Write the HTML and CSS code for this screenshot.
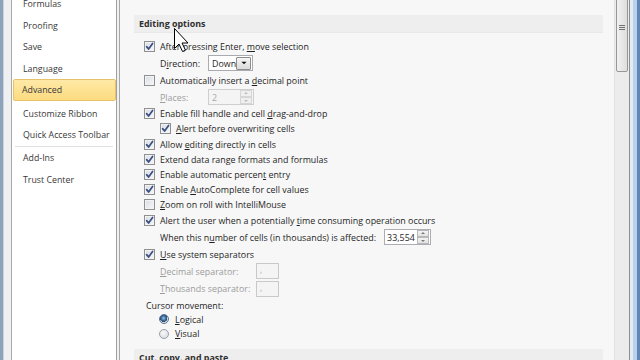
FILE: index.html
```html
<!DOCTYPE html>
<html>
<head>
<meta charset="utf-8">
<title>Excel Options - Advanced</title>
<link rel="stylesheet" href="styles.css">
</head>
<body>
<div class="window">
  <div class="frame-l"></div>
  <div class="gutter"></div>
  <nav class="sidebar">
    <ul class="nav">
      <li class="item">Formulas</li>
      <li class="item">Proofing</li>
      <li class="item">Save</li>
      <li class="item">Language</li>
      <li class="item active">Advanced</li>
      <li class="item after-active">Customize Ribbon</li>
      <li class="item">Quick Access Toolbar</li>
      <li class="sep"></li>
      <li class="item">Add-Ins</li>
      <li class="item">Trust Center</li>
    </ul>
  </nav>
  <div class="gap"></div>
  <main class="content">
    <section class="section">
      <h2 class="band">Editing options</h2>
      <div class="rows">
        <div class="row h17"><span class="cb on"><svg viewBox="0 0 9 9"><path d="M1.6 4.6 L3.6 7 L7.6 1.4"/></svg></span><span class="lbl">After pressing Enter, <u>m</u>ove selection</span></div>
        <div class="row h17 ind"><span class="fl w48">D<u>i</u>rection:</span><span class="dd"><span class="dd-t">Down</span><span class="dd-b"><svg viewBox="0 0 7 4"><path d="M0.5 0.5 H6.5 L3.5 3.5 Z"/></svg></span></span></div>
        <div class="row h17"><span class="cb"></span><span class="lbl">Automatically insert a <u>d</u>ecimal point</span></div>
        <div class="row h17 ind"><span class="fl w48 dis"><u>P</u>laces:</span><span class="spin spin-places dis-box"><span class="spin-t">2</span><span class="spin-b"><span class="sb up"></span><span class="sb dn"></span></span></span></div>
        <div class="row h15"><span class="cb on"><svg viewBox="0 0 9 9"><path d="M1.6 4.6 L3.6 7 L7.6 1.4"/></svg></span><span class="lbl">Enable fill handle and cell <u>d</u>rag-and-drop</span></div>
        <div class="row h16 ind"><span class="cb on"><svg viewBox="0 0 9 9"><path d="M1.6 4.6 L3.6 7 L7.6 1.4"/></svg></span><span class="lbl"><u>A</u>lert before overwriting cells</span></div>
        <div class="row h15"><span class="cb on"><svg viewBox="0 0 9 9"><path d="M1.6 4.6 L3.6 7 L7.6 1.4"/></svg></span><span class="lbl">Allow <u>e</u>diting directly in cells</span></div>
        <div class="row h15"><span class="cb on"><svg viewBox="0 0 9 9"><path d="M1.6 4.6 L3.6 7 L7.6 1.4"/></svg></span><span class="lbl">Extend data range formats and formulas</span></div>
        <div class="row h15"><span class="cb on"><svg viewBox="0 0 9 9"><path d="M1.6 4.6 L3.6 7 L7.6 1.4"/></svg></span><span class="lbl">Enable automatic percen<u>t</u> entry</span></div>
        <div class="row h15"><span class="cb on"><svg viewBox="0 0 9 9"><path d="M1.6 4.6 L3.6 7 L7.6 1.4"/></svg></span><span class="lbl">Enable <u>A</u>utoComplete for cell values</span></div>
        <div class="row h15"><span class="cb"></span><span class="lbl"><u>Z</u>oom on roll with IntelliMouse</span></div>
        <div class="row h17"><span class="cb on"><svg viewBox="0 0 9 9"><path d="M1.6 4.6 L3.6 7 L7.6 1.4"/></svg></span><span class="lbl">Alert the user when a potentially <u>t</u>ime consuming operation occurs</span></div>
        <div class="row h17 ind"><span class="fl">When this n<u>u</u>mber of cells (in thousands) is affected:</span><span class="spin spin-num"><span class="spin-t">33,554</span><span class="spin-b"><span class="sb up"></span><span class="sb dn"></span></span></span></div>
        <div class="row h17"><span class="cb on"><svg viewBox="0 0 9 9"><path d="M1.6 4.6 L3.6 7 L7.6 1.4"/></svg></span><span class="lbl"><u>U</u>se system separators</span></div>
        <div class="row h17 ind"><span class="fl w96 dis"><u>D</u>ecimal separator:</span><span class="sepbox">,</span></div>
        <div class="row h18 ind"><span class="fl w96 dis"><u>T</u>housands separator:</span><span class="sepbox">,</span></div>
        <div class="row h15 cm"><span class="fl">Cursor movement:</span></div>
        <div class="row h13 rind"><span class="rb on"></span><span class="rlbl"><u>L</u>ogical</span></div>
        <div class="row h16 rind"><span class="rb"></span><span class="rlbl"><u>V</u>isual</span></div>
      </div>
      <h2 class="band band2">Cut, copy, and paste</h2>
    </section>
  </main>
  <div class="scrollbar"><div class="thumb"><span class="grip"></span><span class="grip"></span><span class="grip"></span></div></div>
  <div class="frame-r"></div>
</div>
<svg class="cursor" viewBox="0 0 15 25" width="15" height="25"><path d="M0.5 0.5 L0.5 20.5 L5 16 L8.5 23.5 L11.5 22.2 L8 15 L14 15 Z"/></svg>
</body>
</html>
```

FILE: styles.css
```css
* { box-sizing: border-box; }
html, body { margin: 0; padding: 0; }
body {
  width: 640px;
  height: 360px;
  overflow: hidden;
  font-family: "Open Sans", "Noto Sans", sans-serif;
  font-size: 8.9px;
  color: #1f1f1f;
  background: #f0f0f0;
  position: relative;
}
u { text-decoration: underline; text-underline-offset: 1px; }

.window {
  display: flex;
  width: 640px;
  height: 360px;
}
.frame-l {
  width: 4px;
  background: linear-gradient(to right, #8da2bb 0, #8da2bb 3px, #c9d3de 3px);
}
.gutter { width: 7px; background: #eef0f2; }

.sidebar {
  width: 106px;
  background: #fff;
  border-left: 1px solid #a9a9a9;
  border-right: 1px solid #a0a0a0;
  overflow: hidden;
}
.nav {
  list-style: none;
  margin: -6.75px 0 0;
  padding: 0;
}
.item {
  height: 21.5px;
  display: flex;
  align-items: center;
  padding-left: 10px;
  margin: 0 1px;
  font-size: 8.8px;
  color: #383838;
  white-space: nowrap;
}
.item.active {
  background: linear-gradient(#fee9a6, #fcdb80);
  border: 1px solid #e6c36a;
  border-radius: 2px;
  padding-left: 8px;
  margin-left: 1px;
  margin-right: 0;
}
.item.after-active { margin-top: 2px; }
.sep {
  height: 1.5px;
  margin: 0 3px;
  background: #e2e2e2;
}

.gap { width: 2px; background: #f0f0f0; }

.content {
  width: 495px;
  background: #f7f7f7;
  border-left: 1px solid #a7a7a7;
  padding-top: 15px;
  overflow: hidden;
}
.section { margin: 0 11px 0 14px; }
.band {
  margin: 0;
  height: 18px;
  display: flex;
  align-items: center;
  padding-left: 5px;
  background: #eeeeee;
  border-bottom: 1px solid #e8e8e8;
  font-size: 8.9px;
  font-weight: 700;
  color: #2e2e2e;
  white-space: nowrap;
}
.band2 { margin-top: 7.5px; }

.rows {
  padding-left: 10px;
  margin-top: 4.5px;
}
.row { display: flex; align-items: center; }
.h13 { height: 13px; }
.h15 { height: 15px; }
.h16 { height: 16px; }
.h17 { height: 17px; }
.h18 { height: 18px; }
.ind { padding-left: 16px; }
.cm { padding-left: 2px; }
.rind { padding-left: 15px; }

.cb {
  width: 11px;
  height: 11px;
  flex: none;
  border: 1px solid #8f9091;
  background: linear-gradient(135deg, #d9dde4, #f6f7f8);
  box-shadow: inset 0 0 0 1px #f3f3f3;
  display: flex;
  align-items: center;
  justify-content: center;
}
.cb svg { width: 9px; height: 9px; }
.cb path { fill: none; stroke: #3a4f82; stroke-width: 1.7; stroke-linecap: round; stroke-linejoin: round; }
.lbl { margin-left: 5px; white-space: nowrap; }

.fl { white-space: nowrap; }
.w48 { width: 48px; }
.w96 { width: 96px; }
.dis { color: #9c9c9c; }

.dd {
  width: 45px;
  height: 16px;
  border: 1px solid #a9abb0;
  background: #fff;
  display: flex;
  align-items: center;
  padding: 0 1px 0 3px;
}
.dd-t { flex: 1; }
.dd-b {
  width: 15px;
  height: 13px;
  border: 1px solid #8d8d8d;
  border-radius: 1px;
  background: linear-gradient(#f6f6f6, #dadada);
  display: flex;
  align-items: center;
  justify-content: center;
}
.dd-b svg { width: 6px; height: 4px; }
.dd-b path { fill: #111; }

.spin {
  height: 16px;
  border: 1px solid #abadb3;
  background: #fff;
  display: flex;
  align-items: center;
  padding: 0 1px 0 3px;
}
.spin-t { flex: 1; }
.spin-places { width: 46px; }
.spin-num { width: 47px; margin-left: 8px; padding-left: 2px; }
.dis-box { border-color: #cfcfcf; background: #f4f4f4; color: #a8a8a8; }
.spin-b {
  width: 12px;
  height: 14px;
  display: flex;
  flex-direction: column;
}
.sb {
  flex: 1;
  border: 1px solid #b8b8b8;
  background: linear-gradient(#f4f4f4, #e2e2e2);
  position: relative;
}
.dis-box .sb { border-color: #d6d6d6; background: #efefef; }
.sb::after {
  content: "";
  position: absolute;
  left: 50%;
  top: 50%;
  margin-left: -2px;
  border-left: 2px solid transparent;
  border-right: 2px solid transparent;
}
.sb.up::after { margin-top: -1.5px; border-bottom: 2px solid #7a7a7a; }
.sb.dn::after { margin-top: -0.5px; border-top: 2px solid #7a7a7a; }
.dis-box .sb.up::after { border-bottom-color: #bdbdbd; }
.dis-box .sb.dn::after { border-top-color: #bdbdbd; }

.sepbox {
  width: 23px;
  height: 16px;
  border: 1px solid #c9c9c9;
  background: #f4f4f4;
  color: #b0b0b0;
  padding-left: 3px;
  line-height: 12px;
}

.rb {
  width: 10px;
  height: 10px;
  flex: none;
  border-radius: 50%;
  border: 1px solid #9aa0a8;
  background: radial-gradient(circle at 40% 35%, #f8f8f8, #d5d8dc);
}
.rb.on {
  border-color: #58708f;
  background: radial-gradient(circle at 45% 40%, #9cc6ea 0, #3e6d9d 35%, #25496f 55%, #d9dde2 60%, #eef0f2 100%);
}
.rlbl { margin-left: 6px; }

.scrollbar {
  width: 15px;
  background: #ececec;
  border-left: 1px solid #e2e2e2;
  padding: 0 1px;
}
.thumb {
  margin-top: -4px;
  height: 76px;
  border: 1px solid #979797;
  border-radius: 0 0 2px 2px;
  background: linear-gradient(to right, #f0f0f0, #dedede);
  display: flex;
  flex-direction: column;
  align-items: center;
  padding-top: 28px;
  gap: 1px;
}
.grip { width: 6px; height: 1px; background: #707070; }

.frame-r {
  width: 11px;
  background: linear-gradient(to right, #8e8e8e 0, #8e8e8e 1px, #e5ebf1 1px, #e5ebf1 4px, #b9d1ea 4px, #b9d1ea 8px, #5f86b4 8px);
}

.cursor {
  position: absolute;
  left: 174px;
  top: 28px;
}
.cursor path { fill: #fff; stroke: #000; stroke-width: 1; stroke-linejoin: miter; }
```
